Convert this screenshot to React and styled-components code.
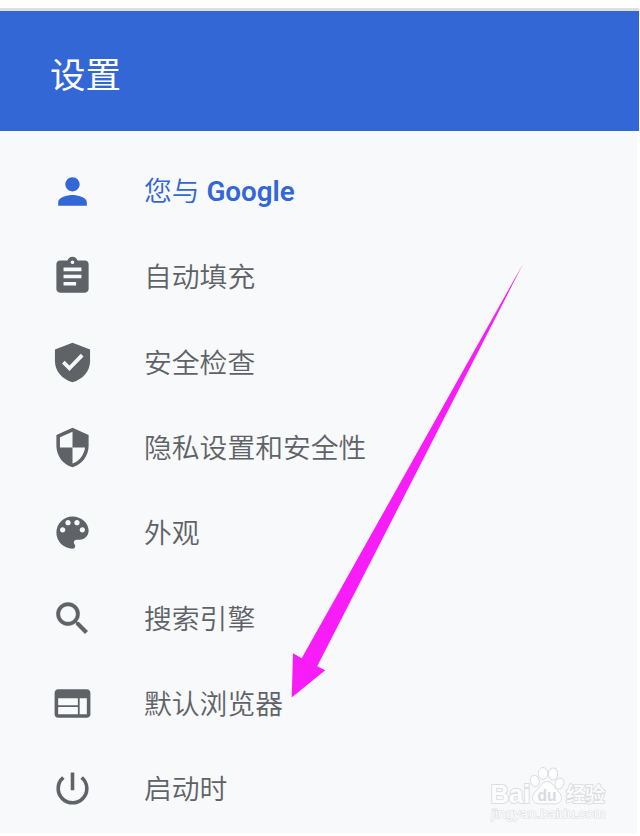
import React from "react";
import styled, { createGlobalStyle } from "styled-components";
import {
    MdPerson,
    MdAssignment,
    MdSecurity,
    MdSearch,
    MdWeb,
    MdPowerSettingsNew,
} from "react-icons/md";

const GlobalStyle = createGlobalStyle`
  body {
    margin: 0;
    background: #fff;
    overflow: hidden;
  }
`;

const PageStyled = styled.div`
  position: relative;
  box-sizing: border-box;
  width: 640px;
  height: 836px;
  padding-top: 8px;
  font-family: Roboto, "Noto Sans CJK SC", sans-serif;
`;

const HeaderStyled = styled.header`
  box-sizing: border-box;
  display: flex;
  align-items: center;
  width: 639px;
  height: 123px;
  padding: 9px 0 0 50px;
  border-top: 3px solid #dedede;
  background: #3367d6;
`;

const TitleStyled = styled.h1`
  margin: 0;
  font-size: 35.5px;
  font-weight: 400;
  line-height: 48px;
  color: #fff;
`;

const MenuStyled = styled.nav`
  box-sizing: border-box;
  display: flex;
  flex-direction: column;
  width: 637px;
  height: 702px;
  padding-top: 18px;
  background: #f8f9fb;
`;

const MenuItemStyled = styled.a`
  display: flex;
  flex: 0 0 85.3px;
  align-items: center;
  padding-left: 50.5px;
  color: ${(props) => (props.$active ? "#3367d6" : "#5f6368")};

  svg {
    flex: none;
    width: 43px;
    height: 43px;
  }
`;

const LabelStyled = styled.span`
  margin-left: 50.5px;
  padding-top: ${(props) => (props.$active ? "1px" : "3px")};
  font-size: 27.8px;
  font-weight: 350;
  line-height: 40px;
  white-space: nowrap;

  b {
    font-size: 27.8px;
    font-weight: 600;
  }
`;

const ArrowStyled = styled.svg`
  position: absolute;
  top: 0;
  left: 0;
  pointer-events: none;
`;

const WatermarkStyled = styled.svg`
  position: absolute;
  left: 484px;
  top: 762px;
  font-family: "Liberation Sans", "Noto Sans CJK SC", sans-serif;
  pointer-events: none;
`;

// a little heavier than the stock icon
const SearchIcon = styled(MdSearch)`
  path:not([fill="none"]) {
    stroke: currentColor;
    stroke-width: 0.25px;
  }
  path[fill="none"] {
    stroke: none;
  }
`;

const ShieldCheck = () => (
    <svg viewBox="0 0 24 24" fill="currentColor">
        <path d="M12 1 2.2 4.7v6.6C2.2 16.8 6.2 21.4 12 23c5.8-1.6 9.8-6.2 9.8-11.7V4.7z" />
        <path d="M6.9 11.8 10.3 15.2 17.4 7.9" fill="none" stroke="#f8f9fb" strokeWidth="2.1" />
    </svg>
);

const Palette = () => (
    <svg viewBox="0 0 24 24" fill="currentColor">
        <path d="M12 3c-4.97 0-9 4.03-9 9s4.03 9 9 9c.83 0 1.5-.67 1.5-1.5 0-.39-.15-.74-.39-1.01-.23-.26-.38-.61-.38-.99 0-.83.67-1.5 1.5-1.5H16c2.76 0 5-2.24 5-5 0-4.42-4.03-8-9-8zm-5.5 9c-.83 0-1.5-.67-1.5-1.5S5.67 9 6.5 9 8 9.67 8 10.5 7.33 12 6.5 12zm3-4C8.67 8 8 7.33 8 6.5S8.67 5 9.5 5s1.5.67 1.5 1.5S10.33 8 9.5 8zm5 0c-.83 0-1.5-.67-1.5-1.5S13.67 5 14.5 5s1.5.67 1.5 1.5S15.33 8 14.5 8zm3 4c-.83 0-1.5-.67-1.5-1.5S16.67 9 17.5 9s1.5.67 1.5 1.5-.67 1.5-1.5 1.5z" />
    </svg>
);

const items = [
    { key: "people", icon: MdPerson, label: <>您与 <b>Google</b></>, active: true },
    { key: "autofill", icon: MdAssignment, label: "自动填充" },
    { key: "safety", icon: ShieldCheck, label: "安全检查" },
    { key: "privacy", icon: MdSecurity, label: "隐私设置和安全性" },
    { key: "appearance", icon: Palette, label: "外观" },
    { key: "search", icon: SearchIcon, label: "搜索引擎" },
    { key: "browser", icon: MdWeb, label: "默认浏览器" },
    { key: "startup", icon: MdPowerSettingsNew, label: "启动时" },
];

const Arrow = () => (
    <ArrowStyled width="640" height="836" viewBox="0 0 640 836">
        <path d="M523.5 263 301.7 658.3 293 653.3 291.7 697.5 325.3 670.3 317.2 666.3z" fill="#f81cf8" />
    </ArrowStyled>
);

const Watermark = () => (
    <WatermarkStyled width="128" height="64" viewBox="0 0 128 64">
        <g fill="#fdfdfe" stroke="#dddee1" strokeWidth="1">
            <text x="6.5" y="41" fontSize="26" fontWeight="700" strokeWidth="2" paintOrder="stroke" textLength="40" lengthAdjust="spacingAndGlyphs">Bai</text>
            <ellipse cx="50.8" cy="18.9" rx="4.4" ry="5.8" transform="rotate(-14 50.8 18.9)" />
            <ellipse cx="59" cy="11.5" rx="4.7" ry="6" />
            <ellipse cx="69" cy="12" rx="4.7" ry="6" transform="rotate(10 69 12)" />
            <ellipse cx="75.5" cy="21.5" rx="4.3" ry="5.7" transform="rotate(18 75.5 21.5)" />
            <path d="M63 19.5c5 0 6 4.5 9.5 8 4 3.5 6 7.5 4.5 11-2 4-6 3.3-14 3.3s-12 .7-14-3.3c-1.5-3.5.5-7.5 4.5-11 3.5-3.5 4.5-8 9.5-8z" />
            <text x="82" y="40" fontSize="20" fontWeight="500" strokeWidth="2" paintOrder="stroke" textLength="39">经验</text>
            <text x="7.5" y="56" fontSize="13.5" strokeWidth="1.2" paintOrder="stroke" textLength="114" lengthAdjust="spacingAndGlyphs">jingyan.baidu.com</text>
        </g>
        <text x="53.5" y="38.5" fontSize="17" fontWeight="700" fill="#d9dadd" textLength="19" lengthAdjust="spacingAndGlyphs">du</text>
    </WatermarkStyled>
);

const App = () => {
    return (
        <PageStyled>
            <GlobalStyle />
            <HeaderStyled>
                <TitleStyled>设置</TitleStyled>
            </HeaderStyled>
            <MenuStyled>
                {items.map(({ key, icon: Icon, label, active }) => (
                    <MenuItemStyled key={key} $active={active}>
                        <Icon />
                        <LabelStyled $active={active}>{label}</LabelStyled>
                    </MenuItemStyled>
                ))}
            </MenuStyled>
            <Arrow />
            <Watermark />
        </PageStyled>
    );
};

export default App;
